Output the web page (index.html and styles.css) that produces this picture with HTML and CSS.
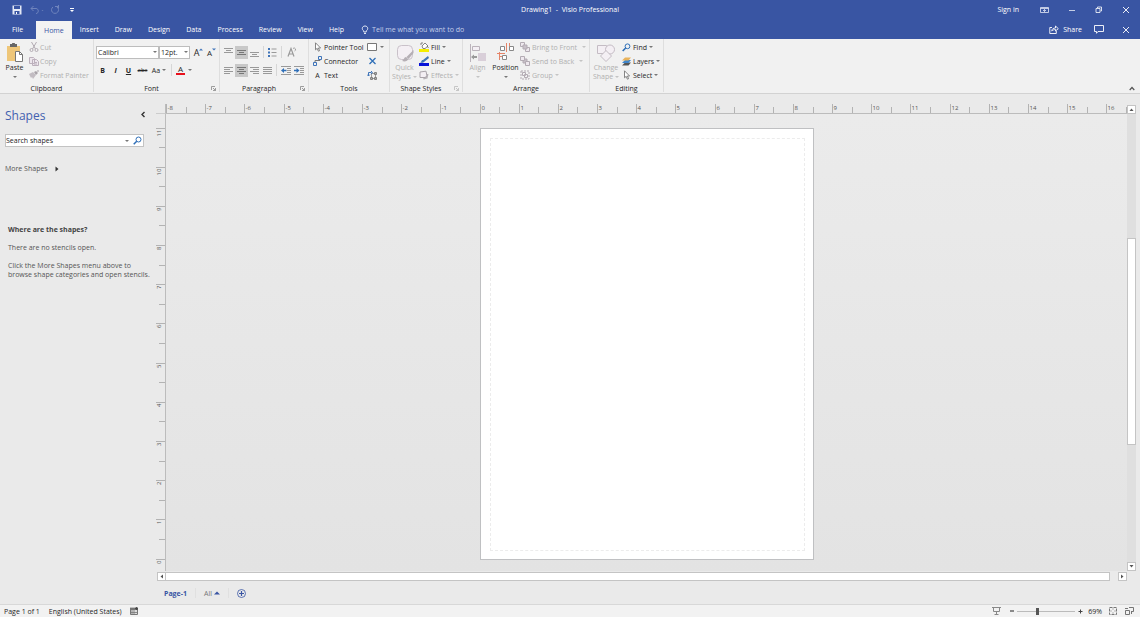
FILE: index.html
```html
<!DOCTYPE html>
<html lang="en">
<head>
<meta charset="utf-8">
<title>Drawing1 - Visio Professional</title>
<link rel="stylesheet" href="styles.css">
</head>
<body>
<header class="titlebar">
  <div class="quick">
    <button class="qbtn" aria-label="Save"><svg width="10" height="10" viewBox="0 0 10 10"><path d="M.5.5h9v9h-9z" fill="#e4e9f5"/><path d="M2 1h6v3H2zM2.500 6h5v3h-5z" fill="#3955a3"/><path d="M4 7h1v2H4z" fill="#fff"/></svg></button>
    <button class="qbtn undo" aria-label="Undo" disabled><svg width="14" height="10" viewBox="0 0 14 10" fill="none" stroke="#6f84bd"><path d="M3.500 1L1 3.500 3.500 6M1 3.500h5c3 0 3 5 0 5"/><path d="M11.500 5h2l-1 1z" fill="#6f84bd" stroke="none"/></svg></button>
    <button class="qbtn redo" aria-label="Repeat" disabled><svg width="10" height="10" viewBox="0 0 10 10" fill="none" stroke="#6f84bd"><path d="M3 2a3.500 3.500 0 1 0 4 0M5 1.500h3.500M8.500 0v3.500"/></svg></button>
    <button class="qbtn more" aria-label="Customize toolbar"><svg width="6" height="6" viewBox="0 0 6 6" fill="#fff"><path d="M1 1h4v1H1zM1 3h4L3 5z"/></svg></button>
  </div>
  <h1 class="doc-title">Drawing1&nbsp; -&nbsp; Visio Professional</h1>
  <div class="window">
    <button class="signin">Sign in</button>
    <button class="wbtn" aria-label="Ribbon display options"><svg width="9" height="8" viewBox="0 0 9 8" fill="none" stroke="#e4e9f5"><path d="M.5 1.500h8v5h-8zM.5 2.500h8M4.500 6V3.500M3 5l1.500-1.500L6 5" stroke-width=".8"/></svg></button>
    <button class="wbtn" aria-label="Minimize"><svg width="8" height="8" viewBox="0 0 8 8"><path d="M1 4.500h6" stroke="#c5cee6"/></svg></button>
    <button class="wbtn" aria-label="Restore"><svg width="8" height="8" viewBox="0 0 8 8" fill="none" stroke="#fff"><path d="M1 2.500h4v4H1zM2.500 2V1h4v4H5.500" stroke-width=".8"/></svg></button>
    <button class="wbtn" aria-label="Close"><svg width="8" height="8" viewBox="0 0 8 8"><path d="M1 1l6 6M7 1L1 7" stroke="#fff" stroke-width=".9"/></svg></button>
  </div>
</header>
<nav class="tabs">
  <button class="tab file">File</button>
  <button class="tab active">Home</button>
  <button class="tab">Insert</button>
  <button class="tab">Draw</button>
  <button class="tab">Design</button>
  <button class="tab">Data</button>
  <button class="tab">Process</button>
  <button class="tab">Review</button>
  <button class="tab">View</button>
  <button class="tab">Help</button>
  <button class="tell"><svg width="8" height="10" viewBox="0 0 8 10" fill="none" stroke="#dfe5f4"><path d="M2.800 7V6C.3 4.500 1 1 4 1s3.700 3.500 1.200 5v1zM3 8.500h2"/></svg>Tell me what you want to do</button>
  <div class="tabs-right">
    <button class="share"><svg width="10" height="9" viewBox="0 0 10 9" fill="none" stroke="#fff" stroke-width=".9"><path d="M3 2.500H.8v6h6.500V6M2.800 6c0-2 1.500-3 3.700-3V1L9.300 3.700 6.500 6V4.500C5 4.500 3.800 5 2.800 6z"/></svg>Share</button>
    <button class="wbtn" aria-label="Comments"><svg width="10" height="9" viewBox="0 0 10 9"><path d="M.5.5h9v6H4L2.500 8.300V6.500h-2z" fill="none" stroke="#fff" stroke-width=".9"/></svg></button>
    <button class="wbtn" aria-label="Close window"><svg width="8" height="8" viewBox="0 0 8 8"><path d="M1 1l6 6M7 1L1 7" stroke="#fff" stroke-width=".9"/></svg></button>
  </div>
</nav>

<section class="ribbon" aria-label="Home">
  <div class="group g-clip">
    <div class="tools">
      <button class="big"><svg width="18" height="20" viewBox="0 0 18 20"><path d="M1 3h13v15H1z" fill="#eec679"/><path d="M4 1h2a1.500 1.500 0 0 1 3 0h2v3H4z" fill="#666"/><path d="M9.500 8.500h4l3 3v7h-7z" fill="#fff" stroke="#777"/><path d="M13.500 8.500v3h3" fill="none" stroke="#777"/></svg><span>Paste</span><i class="caret"></i></button>
      <div class="rows">
        <button class="cmd" disabled><svg width="10" height="10" viewBox="0 0 10 10" fill="none" stroke="#b3abb3"><path d="M2.500 0l4 7M7.500 0l-4 7"/><circle cx="2.500" cy="8" r="1.500"/><circle cx="7.500" cy="8" r="1.500"/></svg>Cut</button>
        <button class="cmd" disabled><svg width="10" height="10" viewBox="0 0 10 10" fill="#ece6ec" stroke="#bcb0bc"><path d="M.5 1.500h4l1 1v5h-5zM3.500 3.500h4l2 2v4h-6z"/><path d="M5 6.500h3M5 8h3"/></svg>Copy</button>
        <button class="cmd" disabled><svg width="10" height="10" viewBox="0 0 10 10"><path d="M0 4l4-2 3 3-3 4-1-2-1 1z" fill="#c2bcc2"/><path d="M5 2l2-1 2 2-2 2zM8 1l1-1 1 1-1 1z" fill="#a9a3a9"/></svg>Format Painter</button>
      </div>
    </div>
    <div class="glabel">Clipboard</div>
  </div>

  <div class="group g-font">
    <div class="tools stack">
      <div class="line">
        <span class="sel name"><select aria-label="Font"><option>Calibri</option></select></span>
        <span class="sel size"><select aria-label="Font size"><option>12pt.</option></select></span>
        <button class="ib grow" aria-label="Increase font size"><span class="ga">A</span><svg width="4" height="8" viewBox="0 0 4 8"><path d="M0 2.500L2 .5l2 2z" fill="#3f74b9"/></svg></button>
        <button class="ib" aria-label="Decrease font size"><span class="gs">A</span><svg width="4" height="8" viewBox="0 0 4 8"><path d="M0 .5h4l-2 2z" fill="#3f74b9"/></svg></button>
      </div>
      <div class="line">
        <button class="ib"><b>B</b></button>
        <button class="ib"><b><em>I</em></b></button>
        <button class="ib"><b><u>U</u></b></button>
        <button class="ib strike"><s>abc</s></button>
        <button class="ib case">Aa<i class="caret"></i></button>
        <i class="vsep"></i>
        <button class="ib color"><span class="fc">A</span><i class="caret"></i></button>
      </div>
    </div>
    <div class="glabel launches">Font<svg class="launch" width="5" height="5" viewBox="0 0 5 5"><path d="M.5 4V.5H4M2 2l2.500 2.500M4.500 2v2.500H2" fill="none" stroke="#888" stroke-width=".8"/></svg></div>
  </div>

  <div class="group g-para">
    <div class="tools stack">
      <div class="line">
        <button class="ib" aria-label="Align top"><svg width="9" height="9" viewBox="0 0 9 9" stroke="#999"><path d="M0 .5h9M2 2.500h5M0 4.500h9"/></svg></button>
        <button class="ib on" aria-label="Align middle"><svg width="9" height="9" viewBox="0 0 9 9" stroke="#777"><path d="M0 2.500h9M2 4.500h5M0 6.500h9"/></svg></button>
        <button class="ib" aria-label="Align bottom"><svg width="9" height="9" viewBox="0 0 9 9" stroke="#999"><path d="M0 4.500h9M2 6.500h5M0 8.500h9"/></svg></button>
        <i class="vsep p"></i>
        <button class="ib" aria-label="Bullets"><svg width="9" height="9" viewBox="0 0 9 9"><path d="M3.500 1h5M3.500 4.500h5M3.500 8h5" stroke="#999"/><path d="M0 0h2v2H0zM0 3.500h2v2H0zM0 7h2v2H0z" fill="#3f74b9"/></svg></button>
        <i class="vsep p"></i>
        <button class="ib rotate" aria-label="Rotate text"><svg width="10" height="10" viewBox="0 0 10 10" fill="none" stroke="#999"><path d="M1 9.500l3-8 3 8M2 7h4" stroke-width="1.200"/><path d="M6 1.500a1.500 1.500 0 1 1 1.500 2.500" stroke-width=".9"/></svg></button>
      </div>
      <div class="line">
        <button class="ib" aria-label="Align left"><svg width="9" height="9" viewBox="0 0 9 9" stroke="#999"><path d="M0 1.500h9M0 3.500h6M0 5.500h9M0 7.500h6"/></svg></button>
        <button class="ib on" aria-label="Center"><svg width="9" height="9" viewBox="0 0 9 9" stroke="#777"><path d="M0 1.500h9M2 3.500h5M0 5.500h9M2 7.500h5"/></svg></button>
        <button class="ib" aria-label="Align right"><svg width="9" height="9" viewBox="0 0 9 9" stroke="#999"><path d="M0 1.500h9M3 3.500h6M0 5.500h9M3 7.500h6"/></svg></button>
        <button class="ib" aria-label="Justify"><svg width="9" height="9" viewBox="0 0 9 9" stroke="#999"><path d="M0 1.500h9M0 3.500h9M0 5.500h9M0 7.500h9"/></svg></button>
        <i class="vsep p"></i>
        <button class="ib" aria-label="Decrease indent"><svg width="10" height="9" viewBox="0 0 10 9"><path d="M0 .5h10M6 2.500h4M6 4.500h4M6 6.500h4M0 8.500h10" stroke="#999"/><path d="M0 4.500L3 2v1.700h2.500v1.600H3V7z" fill="#2f6fb8"/></svg></button>
        <button class="ib" aria-label="Increase indent"><svg width="10" height="9" viewBox="0 0 10 9"><path d="M0 .5h10M6 2.500h4M6 4.500h4M6 6.500h4M0 8.500h10" stroke="#999"/><path d="M5.500 4.500L2.500 2v1.700H0v1.600h2.500V7z" fill="#2f6fb8"/></svg></button>
      </div>
    </div>
    <div class="glabel launches">Paragraph<svg class="launch" width="5" height="5" viewBox="0 0 5 5"><path d="M.5 4V.5H4M2 2l2.500 2.500M4.500 2v2.500H2" fill="none" stroke="#888" stroke-width=".8"/></svg></div>
  </div>

  <div class="group g-tools">
    <div class="tools">
      <div class="rows wide">
        <button class="cmd"><svg width="9" height="10" viewBox="0 0 9 10"><path d="M2.500.8v7l1.700-1.500 1.200 2.900 1.200-.5-1.200-2.700h2.200z" fill="#fff" stroke="#777" stroke-width=".9"/></svg>Pointer Tool</button>
        <button class="cmd"><svg width="9" height="10" viewBox="0 0 9 10" fill="none"><path d="M2 7V4.500h5V3" stroke="#777"/><path d="M.5 6.500h3v3h-3zM5.500.5h3v3h-3z" stroke="#3f74b9" fill="#f1f1f1"/></svg>Connector</button>
        <button class="cmd"><span class="tA">A</span>Text</button>
      </div>
      <div class="rows">
        <button class="cmd" aria-label="Rectangle"><svg width="11" height="8" viewBox="0 0 11 8"><path d="M.5.5h9v7h-9z" fill="#fff" stroke="#777"/></svg><i class="caret"></i></button>
        <button class="cmd" aria-label="Connection point"><svg width="11" height="8" viewBox="0 0 11 8"><path d="M2.500 1l6 6M8.500 1l-6 6" stroke="#2f6fb8" stroke-width="1.300"/></svg></button>
        <button class="cmd" aria-label="Text block"><svg width="11" height="10" viewBox="0 0 11 10" fill="none"><path d="M4.500 3.500h4v5h-4z" stroke="#999"/><path d="M7.500 2.500h2v2h-2zM7.500 7.500h2v2h-2zM3.500 7.500h2v2h-2z" stroke="#777" stroke-width=".9"/><path d="M1.500 6V2.500h3M0 4.500L1.500 6 3 4.500M4 1l1.500 1.500L4 4" stroke="#3f74b9"/></svg></button>
      </div>
    </div>
    <div class="glabel">Tools</div>
  </div>

  <div class="group g-style">
    <div class="tools">
      <button class="big" disabled><svg width="18" height="20" viewBox="0 0 18 20"><rect x="1.500" y="2.500" width="15" height="14" rx="4" fill="#f4eff4" stroke="#c9c1c9"/><path d="M17.500 7l-7 7 2 2 5-6zM10 14c-2 0-2 3-4 4 3 1 6 0 6-2z" fill="#b5afb5"/></svg><span>Quick<br>Styles<i class="caret"></i></span></button>
      <div class="rows">
        <button class="cmd"><svg width="10" height="10" viewBox="0 0 10 10"><path d="M3 4l3-3 3 3-3 2.500H4zM2 3V1h2M8 4l1.500 2" fill="#fff" stroke="#666" stroke-width=".8"/><path d="M0 7h10v3H0z" fill="#f6ee00"/></svg>Fill<i class="caret"></i></button>
        <button class="cmd"><svg width="10" height="10" viewBox="0 0 10 10"><path d="M9 0L4 4l1 2 5-4zM4 4C2 4 3 6 1 6.500c2 .5 4 .5 4-1z" fill="#3f74b9"/><path d="M0 7h10v3H0z" fill="#0712d8"/></svg>Line<i class="caret"></i></button>
        <button class="cmd" disabled><svg width="10" height="10" viewBox="0 0 10 10"><path d="M3.500 4h6l-1 4.500-4 1z" fill="#b8b2b8"/><path d="M1 2l6-.8L8 6 6 7.500H1z" fill="#f4eff4" stroke="#aaa4aa"/></svg>Effects<i class="caret"></i></button>
      </div>
    </div>
    <div class="glabel launches">Shape Styles<svg class="launch" width="5" height="5" viewBox="0 0 5 5"><path d="M.5 4V.5H4M2 2l2.500 2.500M4.500 2v2.500H2" fill="none" stroke="#bbb" stroke-width=".8"/></svg></div>
  </div>

  <div class="group g-arr">
    <div class="tools">
      <button class="big" disabled><svg width="18" height="20" viewBox="0 0 18 20"><path d="M1.500 1v18" stroke="#bbb3bb"/><path d="M3.500 3.500h7v4h-7z" fill="#f4eff4" stroke="#bbb3bb"/><path d="M9 10h8v8H9z" fill="#d9cfd9"/><path d="M2 14l3-2.500V13h3v2H5v1.500z" fill="#999"/></svg><span>Align</span><i class="caret"></i></button>
      <button class="big pos"><svg width="18" height="20" viewBox="0 0 18 20" fill="none"><path d="M9.500 0v9M12.500 0v4M0 10.500h8M2.500 9v8M2.500 13.500h3" stroke="#e58468"/><path d="M3.500 3.500h4v4h-4zM12.500 3.500h4v4h-4zM5.500 12.500h4v4h-4z" fill="#fff" stroke="#888"/></svg><span>Position</span><i class="caret"></i></button>
      <div class="rows">
        <button class="cmd" disabled><svg width="10" height="10" viewBox="0 0 10 10" fill="#eee8ee" stroke="#b3abb3"><path d="M.5.5h4v4h-4z"/><path d="M5.500 5.500h4v4h-4z"/><path d="M3 3h4v4H3z" fill="#c8c0c8"/></svg>Bring to Front<i class="caret far"></i></button>
        <button class="cmd" disabled><svg width="10" height="10" viewBox="0 0 10 10" fill="#eee8ee" stroke="#b3abb3"><path d="M3 3h4v4H3z" fill="#c8c0c8"/><path d="M.5.5h4v4h-4z"/><path d="M5.500 5.500h4v4h-4z"/></svg>Send to Back<i class="caret far"></i></button>
        <button class="cmd" disabled><svg width="10" height="10" viewBox="0 0 10 10" fill="none" stroke="#b3abb3"><path d="M1 1h8v8H1z" stroke-dasharray="2 1"/><path d="M2.500 2.500h3v3h-3zM4.500 4.500h3v3h-3z"/></svg>Group<i class="caret"></i></button>
      </div>
    </div>
    <div class="glabel">Arrange</div>
  </div>

  <div class="group g-edit">
    <div class="tools">
      <button class="big" disabled><svg width="18" height="20" viewBox="0 0 18 20" fill="#f4eff4" stroke="#c4bcc4"><path d="M.5 2.500h9v8h-9z"/><circle cx="13" cy="6.500" r="4.500"/><path d="M9 7.500l5.500 5.500L9 18.500 3.500 13z"/></svg><span>Change<br>Shape<i class="caret"></i></span></button>
      <div class="rows">
        <button class="cmd"><svg width="9" height="9" viewBox="0 0 9 9" fill="none" stroke="#2f6fb8"><circle cx="5.500" cy="3.300" r="2.400"/><path d="M3.700 5L.7 8" stroke-width="1.600"/></svg>Find<i class="caret"></i></button>
        <button class="cmd"><svg width="9" height="9" viewBox="0 0 9 9"><path d="M3 5.500h6L6.500 8.500H0z" fill="#555"/><path d="M3 3h6L6.500 6H0z" fill="#3f86cc"/><path d="M3 .5h6L6.500 3.500H0z" fill="#e9b35c"/></svg>Layers<i class="caret"></i></button>
        <button class="cmd"><svg width="9" height="10" viewBox="0 0 9 10"><path d="M2.500.8v7l1.700-1.500 1.200 2.900 1.200-.5-1.200-2.700h2.200z" fill="#fff" stroke="#777" stroke-width=".9"/></svg>Select<i class="caret"></i></button>
      </div>
    </div>
    <div class="glabel">Editing</div>
  </div>
  <button class="collapse" aria-label="Collapse the ribbon"><svg width="6" height="5" viewBox="0 0 6 5"><path d="M.7 4L3 1.500 5.300 4" fill="none" stroke="#555" stroke-width="1.200"/></svg></button>
</section>

<main class="work">
  <aside class="pane">
    <div class="pane-head"><h2>Shapes</h2><button aria-label="Minimize the Shapes window"><svg width="6" height="7" viewBox="0 0 6 7"><path d="M4.500 1L2 3.500 4.500 6" fill="none" stroke="#333" stroke-width="1.400"/></svg></button></div>
    <div class="search">
      <input type="text" value="Search shapes" aria-label="Search shapes">
      <i class="caret"></i>
      <button aria-label="Search"><svg width="9" height="9" viewBox="0 0 9 9" fill="none" stroke="#2f6fb8"><circle cx="5.500" cy="3.500" r="2.500"/><path d="M3.700 5.300L.7 8.300" stroke-width="1.500"/></svg></button>
    </div>
    <button class="more-shapes">More Shapes<svg width="4" height="6" viewBox="0 0 4 6"><path d="M.5.5v5L3.500 3z" fill="#333"/></svg></button>
    <div class="help">
      <h3>Where are the shapes?</h3>
      <p>There are no stencils open.</p>
      <p>Click the More Shapes menu above to<br>browse shape categories and open stencils.</p>
    </div>
  </aside>
  <section class="drawing">
    <div class="corner"></div>
    <svg class="hruler" id="hruler"></svg>
    <svg class="vruler" id="vruler"></svg>
    <div class="canvas" id="canvas"><div class="sheet"><div class="margins"></div></div></div>
    <div class="vscroll">
      <button aria-label="Scroll up"><svg width="5" height="3" viewBox="0 0 5 3"><path d="M.5 3L2.500 .5 4.500 3z" fill="#555"/></svg></button>
      <div class="vtrack"><div class="vthumb"></div></div>
      <button aria-label="Scroll down"><svg width="5" height="3" viewBox="0 0 5 3"><path d="M.5 0L2.500 2.500 4.500 0z" fill="#555"/></svg></button>
    </div>
    <div class="hscroll">
      <button aria-label="Scroll left"><svg width="3" height="5" viewBox="0 0 3 5"><path d="M3 .5L.5 2.500 3 4.500z" fill="#555"/></svg></button>
      <div class="hthumb"></div>
      <button aria-label="Scroll right"><svg width="3" height="5" viewBox="0 0 3 5"><path d="M0 .5L2.500 2.500 0 4.500z" fill="#555"/></svg></button>
    </div>
    <div class="pages">
      <button class="page-tab">Page-1</button>
      <i class="psep"></i>
      <button class="all">All<svg width="6" height="4" viewBox="0 0 6 4"><path d="M0 3.500h6L3 .5z" fill="#3955a3"/></svg></button>
      <i class="psep"></i>
      <button class="add" aria-label="Insert page"><svg width="9" height="9" viewBox="0 0 9 9" fill="none" stroke="#3955a3"><circle cx="4.500" cy="4.500" r="4" stroke-width=".8"/><path d="M4.500 2v5M2 4.500h5" stroke-width="1.200"/></svg></button>
    </div>
  </section>
</main>

<footer class="status">
  <span>Page 1 of 1</span>
  <button class="lang">English (United States)</button>
  <button aria-label="Macros"><svg width="8" height="8" viewBox="0 0 8 8"><path d="M.5 1.500h7v6h-7z" fill="#ddd" stroke="#777"/><path d="M0 1h5v2H0zM2 4v3M4 4v3M1 5.500h6" stroke="#777" stroke-width=".8" fill="#777"/><circle cx="6.500" cy="1.500" r="1.500" fill="#444"/></svg></button>
  <div class="zoom">
    <button aria-label="Presentation mode"><svg width="9" height="8" viewBox="0 0 9 8" fill="none" stroke="#888"><path d="M0 .5h9M1.500 1v3.500h6V1M4.500 4.500v3M2.500 7.500h4"/></svg></button>
    <button class="minus" aria-label="Zoom out"><svg width="4" height="6" viewBox="0 0 4 6"><path d="M0 3h4" stroke="#444" stroke-width="1.200"/></svg></button>
    <input type="range" min="0" max="100" value="34" aria-label="Zoom">
    <button aria-label="Zoom in"><svg width="5" height="5" viewBox="0 0 5 5"><path d="M.5 2.500h4M2.500.5v4" stroke="#444"/></svg></button>
    <button class="pct">69%</button>
    <button class="fit" aria-label="Fit page to window"><svg width="8" height="8" viewBox="0 0 8 8" fill="none" stroke="#777"><path d="M.5.5h7v7h-7z" stroke-dasharray="3 1"/><path d="M4 1.500v1M4 5.500v1M1.500 4h1M5.500 4h1"/></svg></button>
    <button aria-label="Switch windows"><svg width="9" height="8" viewBox="0 0 9 8" fill="none" stroke="#666"><path d="M.5 3.500h4v4h-4zM4 .5h4.500v4H6M0 1.500h3M6.500 7V5" stroke-width=".9"/></svg></button>
  </div>
</footer>
<script src="rulers.js"></script>
</body>
</html>
```

FILE: styles.css
```css
* { box-sizing: border-box; }
body {
  margin: 0;
  min-height: 100vh;
  display: flex;
  flex-direction: column;
  background: #eaeaea;
  color: #262626;
  font: 7px/9px "Open Sans", "Noto Sans", sans-serif;
}
button, select, input { font: inherit; color: inherit; }
button {
  display: flex;
  align-items: center;
  margin: 0;
  padding: 0;
  border: 0;
  background: none;
  white-space: nowrap;
}
button:disabled { color: #b0b0b0; }
svg { display: block; flex: none; }
h1, h2, h3, p { margin: 0; font: inherit; }

.caret {
  flex: none;
  border: 2px solid transparent;
  border-top-color: #777;
  border-bottom: 0;
  width: 4px;
  height: 2px;
}
button:disabled .caret { border-top-color: #c4c4c4; }

/* Title bar */
.titlebar {
  display: grid;
  grid-template-columns: 1fr auto 1fr;
  align-items: center;
  height: 20px;
  padding-bottom: 1px;
  background: #3955a3;
  color: #fff;
}
.quick { display: flex; align-items: center; padding-left: 12px; }
.quick .undo { margin-left: 8px; }
.quick .redo { margin-left: 6px; }
.quick .more { margin-left: 9px; }
.window, .tabs-right {
  display: flex;
  justify-content: flex-end;
  align-items: center;
  padding-right: 1px;
}
.wbtn { width: 27px; justify-content: center; }
.signin { margin-right: 12px; }

/* Ribbon tabs */
.tabs {
  display: flex;
  height: 19px;
  background: #3955a3;
  color: #fff;
}
.tab { padding: 0 8px; }
.tab.file { width: 36px; padding-left: 12px; }
.tab.active { margin-top: 1px; background: #f3f3f3; color: #3955a3; }
.tell { gap: 3px; margin-left: 9px; color: #c3cde8; }
.tabs-right { margin-left: auto; }
.share { gap: 4px; margin-right: 3px; }

/* Ribbon */
.ribbon {
  display: flex;
  height: 55px;
  background: #f1f1f1;
  border-bottom: 1px solid #d2d2d2;
}
.group {
  display: flex;
  flex-direction: column;
  flex: none;
  border-right: 1px solid #dedede;
  margin-bottom: 1px;
}
.g-clip { width: 94px; }
.g-font { width: 126px; }
.g-para { width: 89px; }
.g-tools { width: 81px; }
.g-style { width: 73px; }
.g-arr { width: 127px; }
.g-edit { width: 74px; }
.tools { display: flex; flex: none; height: 43px; padding-top: 1px; }
.glabel { position: relative; text-align: center; line-height: 13px; }
.glabel.launches { padding-right: 10px; }
.launch { position: absolute; right: 3px; top: 4px; }
.big {
  flex-direction: column;
  width: 29px;
  padding-top: 3px;
  text-align: center;
  line-height: 9px;
}
.big > .caret { margin-top: 4px; }
.big span .caret { display: inline-block; margin: 0 0 1px 2px; }
.g-arr .pos { width: 27px; }
.g-edit .big { width: 32px; }
.rows { display: flex; flex-direction: column; }
.rows.wide { width: 54px; }
.g-arr .rows { padding-left: 1px; }
.cmd { height: 14px; gap: 2px; }
.caret.far { margin-left: 3px; }
.g-clip .cmd { gap: 1px; }
.g-tools .rows { padding-left: 4px; }
.tA { width: 9px; text-align: center; }

.stack { flex-direction: column; padding-top: 4px; }
.line { display: flex; align-items: center; flex: none; height: 18px; }
.g-font .line { padding-left: 2px; }
.g-para .line { padding-left: 2px; }
.ib { width: 13px; height: 13px; justify-content: center; }
.ib.on { background: #c8c8c8; }
.ib.strike { width: 15px; font-size: 6px; }
.ib.case { width: 18px; gap: 2px; }
.ib.color { width: 18px; gap: 3px; }
.ib.rotate { width: 15px; }
.ib.grow { margin-left: 2px; }
.ga { font-size: 9px; }
.gs { font-size: 8px; }
.fc { padding: 0 2px; font-size: 8px; line-height: 8px; border-bottom: 2px solid #e8101c; }
.vsep { width: 1px; height: 12px; margin: 0 3px; background: #d6d6d6; }
.vsep.p { margin: 0 2px; }
.sel { position: relative; flex: none; }
.sel::after {
  content: "";
  position: absolute;
  right: 2px;
  top: 5px;
  border: 2px solid transparent;
  border-top-color: #777;
  border-bottom: 0;
}
.sel select {
  appearance: none;
  display: block;
  width: 100%;
  height: 13px;
  padding: 0 1px;
  border: 1px solid #bdbdbd;
  border-radius: 0;
  background: #fff;
}
.sel.name { width: 63px; }
.sel.size { width: 31px; }
.collapse { margin: auto 5px 2px auto; }

/* Work area */
.work { display: flex; flex: 1; }
.pane { width: 156px; flex: none; padding: 14px 12px 0 5px; color: #555; }
.pane-head { display: flex; justify-content: space-between; align-items: center; }
.pane-head button { margin: -3px -2px 0 0; }
.pane h2 { font-size: 12px; line-height: 16px; color: #4361b0; }
.search {
  display: flex;
  align-items: center;
  height: 13px;
  margin-top: 10px;
  padding-right: 1px;
  border: 1px solid #c3c3c3;
  background: #fff;
}
.search input {
  flex: 1;
  min-width: 0;
  padding: 0;
  border: 0;
  background: none;
  color: #222;
}
.search button { margin-left: 4px; }
.more-shapes { margin-top: 17px; gap: 7px; }
.help { margin-top: 52px; padding-left: 3px; }
.help h3 { font-weight: 700; color: #444; }
.help p { margin-top: 9px; white-space: nowrap; }

.drawing {
  flex: 1;
  min-width: 0;
  display: grid;
  grid-template: 20px 1fr 10px 23px / 10px 1fr 13px;
}
.corner { border-right: 1px solid #bbb; border-bottom: 1px solid #ccc; margin-top: 10px; }
.hruler, .vruler { width: 100%; height: 100%; overflow: hidden; }
.hruler { grid-area: 1 / 2; border-bottom: 1px solid #bcbcbc; }
.vruler { grid-area: 2 / 1; border-right: 1px solid #bcbcbc; }
.hruler line, .vruler line { stroke: #b3b3b3; }
.hruler text, .vruler text { font-size: 6px; fill: #555; }
.canvas {
  grid-area: 2 / 2;
  display: flex;
  align-items: center;
  justify-content: center;
  padding-top: 2px;
  background: linear-gradient(#ebebeb, #e3e3e3);
}
.sheet {
  width: 334px;
  height: 432px;
  padding: 9px 8px 8px 9px;
  background: #fff;
  border: 1px solid #bfc0c2;
}
.margins { height: 100%; border: 1px dashed #ececec; }
.vscroll { grid-area: 1 / 3 / 3 / 4; display: flex; flex-direction: column; padding: 11px 4px 0 0; }
.vscroll button, .hscroll button {
  flex: none;
  justify-content: center;
  width: 9px;
  height: 9px;
  background: #fff;
  border: 1px solid #c4c4c4;
}
.vtrack { flex: 1; display: flex; background: #dfdfdf; padding-top: 124px; }
.vthumb { width: 9px; height: 207px; background: #fff; border: 1px solid #c4c4c4; }
.hscroll { grid-area: 3 / 1 / 4 / 4; display: flex; padding: 1px 13px 0 1px; }
.hthumb { flex: 1; margin-right: 8px; background: #fff; border: 1px solid #c4c4c4; border-left: 0; }
.pages { grid-area: 4 / 1 / 5 / 4; display: flex; align-items: center; padding: 1px 0 0 8px; }
.page-tab { font-weight: 700; color: #3955a3; }
.psep { width: 1px; height: 10px; margin: 0 8px; background: #e0e0e0; }
.all { gap: 2px; color: #777; }

/* Status bar */
.status {
  display: flex;
  align-items: center;
  height: 13px;
  padding: 0 6px 0 4px;
  background: #f2f2f2;
  border-top: 1px solid #d8d8d8;
}
.lang { margin: 0 8px 0 9px; }
.zoom { display: flex; align-items: center; margin-left: auto; }
.minus { margin: 0 3px 0 9px; }
.zoom input {
  appearance: none;
  width: 58px;
  height: 8px;
  margin: 0 3px 0 0;
  background: linear-gradient(#bbb, #bbb) center / 100% 1px no-repeat;
}
.zoom input::-webkit-slider-thumb { appearance: none; width: 3px; height: 7px; background: #555; }
.pct { margin-left: 5px; }
.fit { margin: 0 8px 0 7px; }
```

FILE: rulers.js
```js
// Draws the inch rulers along the canvas, aligned to the centred sheet.
const INCH = 39.18;
const NS = "http://www.w3.org/2000/svg";
const hr = document.getElementById("hruler");
const vr = document.getElementById("vruler");

function add(parent, tag, attrs, text) {
  const el = document.createElementNS(NS, tag);
  for (const k in attrs) el.setAttribute(k, attrs[k]);
  if (text !== undefined) el.textContent = text;
  parent.appendChild(el);
}

function draw() {
  hr.replaceChildren();
  vr.replaceChildren();
  const sheet = document.querySelector(".sheet").getBoundingClientRect();
  const area = document.getElementById("canvas").getBoundingClientRect();
  const ox = sheet.left - area.left;
  const oy = sheet.bottom - area.top - 1;
  for (let h = -200; h <= 200; h++) {
    const major = h % 2 === 0;
    const x = Math.round(ox + h * INCH / 2) + 0.5;
    if (x > 0 && x < area.width) {
      add(hr, "line", { x1: x, x2: x, y1: major ? 10 : 13, y2: 20 });
      if (major) add(hr, "text", { x: x + 1, y: 16 }, h / 2);
    }
    const y = Math.round(oy - h * INCH / 2) + 0.5;
    if (y > 0 && y < area.height) {
      add(vr, "line", { x1: major ? 0 : 3, x2: 10, y1: y, y2: y });
      if (major) add(vr, "text", { x: 0, y: 0, "text-anchor": "end", transform: `translate(5 ${y + 1}) rotate(-90)` }, h / 2);
    }
  }
}
draw();
window.addEventListener("resize", draw);
```
